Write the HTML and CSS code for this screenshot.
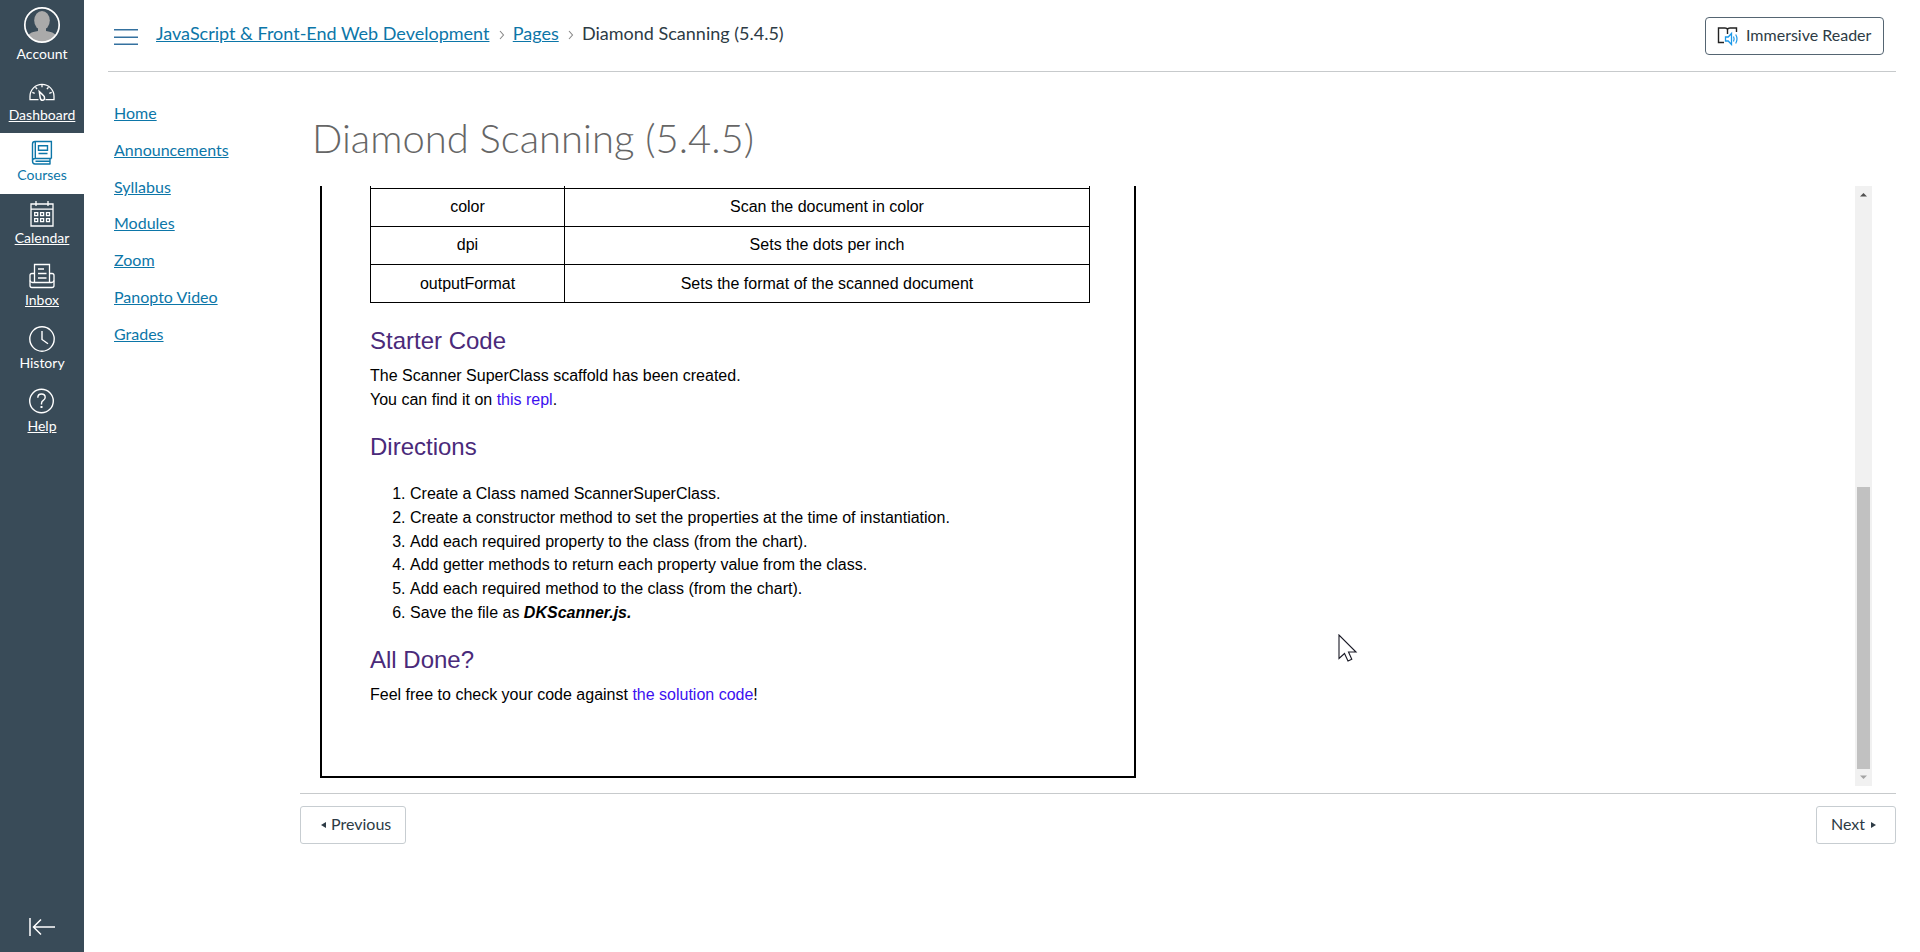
FILE: index.html
```html
<!DOCTYPE html>
<html lang="en">
<head>
<meta charset="utf-8">
<title>Diamond Scanning (5.4.5)</title>
<link rel="stylesheet" href="styles.css">
</head>
<body>
<div class="app">
  <nav class="rail">
    <a class="rail-item account">
      <svg class="avatar" width="38" height="38" viewBox="0 0 38 38"><defs><clipPath id="disc"><circle cx="19" cy="19" r="17"/></clipPath></defs><circle cx="19" cy="19" r="17" fill="#394b58"/><g clip-path="url(#disc)" fill="#aaa"><ellipse cx="19" cy="14.5" rx="7.8" ry="9.5"/><path d="M15 21h8v4c7 1 10 3 12 7v6H3v-6c2-4 5-6 12-7z"/></g><circle cx="19" cy="19" r="17.2" fill="none" stroke="#fff" stroke-width="1.7"/></svg>
      <span>Account</span>
    </a>
    <a class="rail-item dashboard linked">
      <svg class="icon" viewBox="0 0 26 26" fill="none" stroke="#fff" stroke-width="1.3"><path d="M9.5 20.6H1v-3.2a12 12 0 0 1 24 0v3.2h-8.500"/><path d="M10.300 12.500l3.700 3.600c2.300 1.600 2 5.200-.4 5.200-2 0-2.300-1.200-2.500-3z" stroke-width="1.500"/><path d="M13 5.500v2.800M3.300 13.400l2.400 1M22.700 13.400l-2.400 1M6.500 8.300l1.600 1.800M19.500 8.300l-1.600 1.800"/></svg>
      <span>Dashboard</span>
    </a>
    <a class="rail-item active">
      <svg class="icon" viewBox="0 0 26 26" fill="none" stroke="#0c76a8" stroke-width="1.400"><path d="M22.400 18.500V1.500H6Q3.500 1.500 3.500 4V21q0 3 2.500 3h15.500M22.400 18.500H6q-2.500 0-2.500 2.500M6.300 2v16.500M21 18.500v5.500M6.500 21.300H21"/><path d="M9.500 5.800h9v4.500h-9zM9.500 13.500h9"/></svg>
      <span>Courses</span>
    </a>
    <a class="rail-item linked">
      <svg class="icon" viewBox="0 0 26 26" fill="none" stroke="#fff" stroke-width="1.300"><path d="M2 3h22v22H2zM2 8.200h22M7 0v5M19 0v5"/><path d="M5.700 11.700h3v3h-3zM11.600 11.700h3v3h-3zM17.500 11.700h3v3h-3zM5.700 17.700h3v3h-3zM11.600 17.700h3v3h-3zM17.500 17.700h3v3h-3z"/></svg>
      <span>Calendar</span>
    </a>
    <a class="rail-item linked">
      <svg class="icon" viewBox="0 0 26 26" fill="none" stroke="#fff" stroke-width="1.300"><path d="M5.500 19.500V1.500h15v18M5.500 10.500H3q-2 0-2 2v10q0 2 2 2h20q2 0 2-2v-10q0-2-2-2h-2.500"/><path d="M1 17.500q.5 2 2.500 2h19q2 0 2.500-2M9 6h6M9 10.500h8.500M9 15h8.500"/></svg>
      <span>Inbox</span>
    </a>
    <a class="rail-item">
      <svg class="icon" viewBox="0 0 26 26" fill="none" stroke="#fff" stroke-width="1.400"><circle cx="13" cy="13" r="12.200"/><path d="M13 5v8.500l6 4.300"/></svg>
      <span>History</span>
    </a>
    <a class="rail-item linked help">
      <svg class="icon" viewBox="0 0 26 26" fill="none" stroke="#fff" stroke-width="1.400"><circle cx="12.500" cy="13" r="11.800"/><path d="M8.800 9.700q0-3.700 3.700-3.700t3.700 3.300q0 1.900-1.900 3.100-1.800 1.100-1.800 3v1"/><path d="M12.500 18v2" stroke-width="2"/></svg>
      <span>Help</span>
    </a>
    <svg class="collapse" width="28" height="20" viewBox="0 0 28 20" fill="none" stroke="#fff" stroke-width="1.500"><path d="M2 1v18M5.500 10H27M13 2.500L5.500 10l7.500 7.500"/></svg>
  </nav>

  <div class="page">
    <header class="topbar">
      <svg class="menu" width="24" height="18" viewBox="0 0 24 18" stroke="#34719f" stroke-width="1.600"><path d="M0 1.700h24M0 9.200h24M0 16.300h24"/></svg>
      <div class="crumbs">
        <a>JavaScript &amp; Front-End Web Development</a>
        <svg class="chevron" width="6" height="10" viewBox="0 0 6 10"><path d="M1 1l3.500 4L1 9" fill="none" stroke="#888" stroke-width="1.100"/></svg>
        <a>Pages</a>
        <svg class="chevron" width="6" height="10" viewBox="0 0 6 10"><path d="M1 1l3.500 4L1 9" fill="none" stroke="#888" stroke-width="1.100"/></svg>
        <span>Diamond Scanning (5.4.5)</span>
      </div>
      <button class="reader">
        <svg width="22" height="20" viewBox="0 0 22 20" fill="none"><path d="M7 16.500H1.500V2h6.500q2 0 2.500 1.500Q11 2 13 2h6.500v4M10.500 3.500V8" stroke="#222" stroke-width="1.400"/><path d="M8.500 11v4h2.700l3.300 3.500v-11L11.200 11z" stroke="#1b98e8" stroke-width="1.300"/><path d="M16.500 10.500q1.300 2.500 0 5M18.700 8.500q2.600 4.500 0 9" stroke="#1b98e8" stroke-width="1.200"/></svg>
        <span>Immersive Reader</span>
      </button>
    </header>

    <div class="columns">
      <ul class="course-nav">
        <li><a>Home</a></li>
        <li><a>Announcements</a></li>
        <li><a>Syllabus</a></li>
        <li><a>Modules</a></li>
        <li><a>Zoom</a></li>
        <li><a>Panopto Video</a></li>
        <li><a>Grades</a></li>
      </ul>

      <main class="content">
        <h1>Diamond Scanning (5.4.5)</h1>
        <div class="frame">
          <article class="doc">
            <table class="props">
              <tr class="cut"><td></td><td></td></tr>
              <tr><td>color</td><td>Scan the document in color</td></tr>
              <tr><td>dpi</td><td>Sets the dots per inch</td></tr>
              <tr class="last"><td>outputFormat</td><td>Sets the format of the scanned document</td></tr>
            </table>
            <h2>Starter Code</h2>
            <p>The Scanner SuperClass scaffold has been created.<br>You can find it on <a>this repl</a>.</p>
            <h2 class="tight">Directions</h2>
            <ol>
              <li>Create a Class named ScannerSuperClass.</li>
              <li>Create a constructor method to set the properties at the time of instantiation.</li>
              <li>Add each required property to the class (from the chart).</li>
              <li>Add getter methods to return each property value from the class.</li>
              <li>Add each required method to the class (from the chart).</li>
              <li>Save the file as <b><i>DKScanner.js.</i></b></li>
            </ol>
            <h2 class="tight">All Done?</h2>
            <p>Feel free to check your code against <a>the solution code</a>!</p>
          </article>
          <div class="scrollbar">
            <svg width="17" height="17" viewBox="0 0 17 17"><path d="M5 10.500h7L8.500 7z" fill="#505050"/></svg>
            <div class="thumb"></div>
            <svg width="17" height="17" viewBox="0 0 17 17"><path d="M5 6.500h7L8.500 10z" fill="#a3a3a3"/></svg>
          </div>
        </div>
        <footer class="pager">
          <button class="prev"><svg width="5" height="6" viewBox="0 0 5 6"><path d="M5 0v6L0 3z" fill="#2d3b45"/></svg>Previous</button>
          <button class="next">Next<svg width="5" height="6" viewBox="0 0 5 6"><path d="M0 0v6l5-3z" fill="#2d3b45"/></svg></button>
        </footer>
      </main>
    </div>
  </div>
</div>
<svg class="pointer" width="20" height="29" viewBox="0 0 20 29"><path d="M1 1v23.500l5.500-5 3.500 7.500 3.800-1.700-3.300-7.300h7.500z" fill="#fff" stroke="#1a1a26" stroke-width="1.100"/></svg>
</body>
</html>
```
FILE: styles.css
```css
* { box-sizing: border-box; }
body { margin: 0; background: #fff; color: #2d3b45; font: 16px Lato, sans-serif; overflow: hidden; }
.app { display: flex; height: 952px; }

.rail { width: 84px; background: #394b58; display: flex; flex-direction: column; flex: none; }
.rail-item { height: 62.6px; padding-top: 6.500px; display: flex; flex-direction: column; align-items: center; color: #fff; font-size: 14px; line-height: 20px; }
.rail-item span { margin-top: 1px; }
.linked span { text-decoration: underline; }
.icon { width: 26px; height: 26px; flex: none; display: block; }
.rail-item.account { height: 72px; padding-top: 5.500px; }
.avatar { flex: none; }
.account span, .dashboard span { margin-top: 0; }
.dashboard { height: 61px; }
.active { height: 61px; background: #fff; color: #0c76a8; }
.rail-item.active span { margin-top: -1px; }
.rail-item.help span { margin-top: 2px; }
.collapse { margin: auto 0 15px 28px; }

.page { flex: 1; padding: 0 24px; }
.topbar { height: 72px; border-bottom: 1px solid #c7cacc; display: flex; align-items: flex-start; padding: 0 12px 0 6px; }
.menu { margin-top: 28px; }
.crumbs { display: flex; align-items: center; margin: 22px 0 0 18px; font-size: 18px; line-height: 22px; white-space: nowrap; }
.crumbs a, .course-nav a { color: #0c76a8; text-decoration: underline; }
.chevron { margin: 4px 8px 0 9.300px; }
button { font: 16px Lato, sans-serif; color: #2d3b45; background: #fff; border: 1px solid #c7cdd1; border-radius: 3px; height: 38px; display: flex; align-items: center; padding: 0 0 3px; white-space: nowrap; }
.reader { margin: 17px 0 0 auto; width: 179px; border-color: #556572; border-radius: 4px; padding-left: 11px; gap: 7px; }
.reader svg { margin-top: 2px; }

.columns { display: flex; }
.course-nav { list-style: none; margin: 0; padding: 23px 0 0 6px; width: 192px; }
.course-nav li { height: 36.800px; line-height: 36.800px; }
.content { flex: 1; }
h1 { margin: 0; padding: 40px 0 0 12px; height: 114px; font-size: 40px; line-height: 52px; font-weight: 300; color: #666; }
.frame { height: 600px; margin: 0 24px 0 20px; display: flex; justify-content: space-between; align-items: flex-start; overflow: hidden; }
.doc { width: 816px; height: 592px; border: 2px solid #000; border-top: 0; padding: 0 45px 0 48px; font: 16px/23.800px "Liberation Sans", Arial, sans-serif; color: #000; }
.props { width: 720px; table-layout: fixed; border-collapse: separate; border-spacing: 0; border-left: 1px solid #000; }
.props td { height: 38px; padding: 0 0 2px; border: 0 solid #000; border-width: 0 1px 1px 0; text-align: center; line-height: 24px; }
.props td:first-child { width: 194px; }
.props .cut td { height: 3px; padding: 0; }
.props .last td { padding: 0; }
.doc h2 { margin: 0; font-size: 24px; font-weight: 400; line-height: 30px; color: #4a2a7a; padding-top: 23px; }
.doc h2.tight { padding-top: 20.400px; }
.doc p { margin: 0; padding-top: 8px; }
.doc a { color: #3c10f0; }
.doc ol { margin: 0; padding: 20px 0 0 40px; }
.scrollbar { width: 17px; height: 600px; background: #f1f1f1; display: flex; flex-direction: column; }
.thumb { width: 13px; height: 282px; margin: auto 2px 0; background: #c1c1c1; }
.pager { display: flex; justify-content: space-between; margin-top: 7px; border-top: 1px solid #c7cacc; padding-top: 12px; }
.pager svg { margin-top: 3px; }
.prev { width: 106px; padding-left: 20px; gap: 5px; }
.next { width: 80px; padding-left: 14px; gap: 6px; }
.pointer { position: absolute; left: 1338px; top: 634px; }
```
